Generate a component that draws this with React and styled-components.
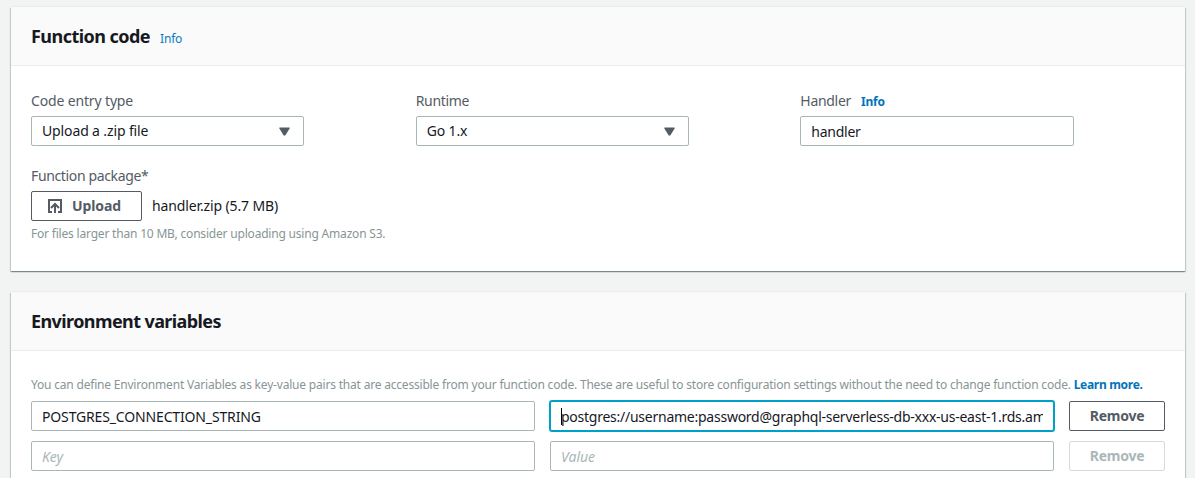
import React from 'react';
import styled, { createGlobalStyle, css } from 'styled-components';

const GlobalStyle = createGlobalStyle`
  * { box-sizing: border-box; }
  html, body { margin: 0; height: 100%; overflow: hidden; }
  body {
    background: #f2f3f3;
    color: #16191f;
    font-family: 'Noto Sans', 'Open Sans', sans-serif;
    font-size: 14px;
    line-height: 20px;
  }
`;

const Page = styled.main`
  display: flex;
  flex-direction: column;
  gap: 21px;
  height: 478px;
  padding: 7px 10px 0 11px;
  overflow: hidden;
`;

const Card = styled.section`
  flex: none;
  height: ${(p) => p.$height}px;
  background: #fff;
  box-shadow:
    0 -1px 0 0 #eaeded,
    0 1px 1px 0 rgba(0, 28, 36, 0.3),
    1px 1px 1px 0 rgba(0, 28, 36, 0.15),
    -1px 1px 1px 0 rgba(0, 28, 36, 0.15);
`;

const CardHeader = styled.header`
  display: flex;
  align-items: baseline;
  gap: 10px;
  height: 59px;
  padding: 17px 20px 0;
  background: #fafafa;
  border-bottom: 1px solid #eaeded;
`;

const Title = styled.h2`
  margin: 0;
  font-size: 18px;
  line-height: 24px;
  font-weight: 700;
  letter-spacing: ${(p) => p.$tracking}px;
`;

const InfoLink = styled.a`
  color: ${(p) => (p.$bold ? '#0073bb' : '#087cc0')};
  font-size: 12px;
  font-weight: ${(p) => (p.$bold ? 700 : 400)};
  letter-spacing: -0.2px;
`;

const CardBody = styled.div`
  display: flex;
  flex-direction: column;
  padding: 25px 20px 0;
`;

const FieldGrid = styled.div`
  display: grid;
  grid-template-columns: repeat(3, 1fr);
  margin: 0 -20px 20px 0;
`;

const Field = styled.div`
  display: flex;
  flex-direction: column;
  align-items: flex-start;
`;

const Label = styled.label`
  display: flex;
  align-items: baseline;
  gap: 10px;
  height: 25px;
  line-height: 20px;
  color: #545b64;
  letter-spacing: ${(p) => p.$tracking || 0}px;
`;

const box = css`
  height: 30px;
  border: 1px solid #aab7b8;
  border-radius: 2px;
  background: #fff;
`;

const Select = styled.div`
  ${box}
  display: flex;
  align-items: center;
  justify-content: space-between;
  width: 273px;
  padding: 0 13px 0 10px;
  letter-spacing: -0.13px;
`;

const Input = styled.input`
  ${box}
  display: block;
  width: ${(p) => p.$width || '274px'};
  min-width: 0;
  padding: 1px 10px 0;
  font: inherit;
  color: #16191f;
  letter-spacing: ${(p) => p.$tracking || 0}px;
  outline: none;
  &::placeholder {
    color: #aab7b8;
    font-style: italic;
    opacity: 1;
  }
  ${(p) =>
    p.$focused &&
    css`
      border-color: #00a1c9;
      box-shadow: 0 0 0 1px #00a1c9;
    `}
`;

const Button = styled.button`
  display: flex;
  align-items: center;
  justify-content: ${(p) => (p.$withIcon ? 'flex-start' : 'center')};
  gap: 9px;
  height: 30px;
  width: ${(p) => p.$width}px;
  padding: ${(p) => (p.$withIcon ? '0 0 0 15px' : '0')};
  border: 1px solid #545b64;
  border-radius: 2px;
  background: #fff;
  color: #545b64;
  font: inherit;
  font-weight: 700;
  letter-spacing: ${(p) => p.$tracking || 0}px;
  &:disabled {
    border-color: #d5dbdb;
    color: #aab7b8;
  }
`;

const UploadRow = styled.div`
  display: flex;
  align-items: center;
  gap: 10px;
`;

const FileName = styled.span`
  letter-spacing: -0.13px;
`;

const Hint = styled.p`
  margin: 0;
  padding-top: ${(p) => p.$top}px;
  color: #879596;
  font-size: 12px;
  line-height: 18px;
  letter-spacing: -0.195px;
  white-space: nowrap;
`;

const LearnMore = styled.a`
  color: #0073bb;
  font-weight: 700;
  letter-spacing: -0.3px;
`;

const VariableList = styled.div`
  display: grid;
  gap: 10px;
  margin-top: 7px;
`;

const VariableRow = styled.div`
  display: grid;
  grid-template-columns: 504px 504px 96px;
  column-gap: 15px;
`;

const ValueCell = styled.div`
  position: relative;
`;

const Caret = styled.span`
  position: absolute;
  left: 11px;
  top: 7px;
  width: 1px;
  height: 17px;
  background: #000;
`;

const Arrow = () => (
  <svg width="11" height="9" viewBox="0 0 11 9" aria-hidden="true">
    <path d="M0.4 0.5h10.2v1L6.3 8.4H4.7L0.4 1.5z" fill="#545b64" />
  </svg>
);

const UploadIcon = () => (
  <svg width="16" height="16" viewBox="0 0 16 16" fill="none" stroke="#545b64" strokeWidth="2" aria-hidden="true">
    <path d="M5 14H2V2h12v12h-3" />
    <path d="M8 15V6.5M4 10l4-4 4 4" />
  </svg>
);

export default function App() {
  return (
    <>
      <GlobalStyle />
      <Page>
        <Card $height={264}>
          <CardHeader>
            <Title $tracking={-0.54}>Function code</Title>
            <InfoLink>Info</InfoLink>
          </CardHeader>
          <CardBody>
            <FieldGrid>
              <Field>
                <Label $tracking={-0.15}>Code entry type</Label>
                <Select>
                  Upload a .zip file
                  <Arrow />
                </Select>
              </Field>
              <Field>
                <Label $tracking={-0.3}>Runtime</Label>
                <Select>
                  Go 1.x
                  <Arrow />
                </Select>
              </Field>
              <Field>
                <Label $tracking={-0.3}>
                  Handler
                  <InfoLink $bold>Info</InfoLink>
                </Label>
                <Input $tracking={-0.25} defaultValue="handler" />
              </Field>
            </FieldGrid>
            <Field>
              <Label $tracking={-0.36}>Function package*</Label>
              <UploadRow>
                <Button $width={111} $tracking={-0.1} $withIcon>
                  <UploadIcon />
                  Upload
                </Button>
                <FileName>handler.zip (5.7 MB)</FileName>
              </UploadRow>
              <Hint $top={4}>For files larger than 10 MB, consider uploading using Amazon S3.</Hint>
            </Field>
          </CardBody>
        </Card>

        <Card $height={240}>
          <CardHeader>
            <Title $tracking={-0.59}>Environment variables</Title>
          </CardHeader>
          <CardBody>
            <Hint $top={0}>
              You can define Environment Variables as key-value pairs that are accessible from your function code. These are
              useful to store configuration settings without the need to change function code.{' '}
              <LearnMore>Learn more.</LearnMore>
            </Hint>
            <VariableList>
              <VariableRow>
                <Input $width="100%" $tracking={-0.15} defaultValue="POSTGRES_CONNECTION_STRING" />
                <ValueCell>
                  <Input
                    $width="100%"
                    $tracking={-0.25}
                    $focused
                    defaultValue="postgres://username:password@graphql-serverless-db-xxx-us-east-1.rds.amazonaws.com"
                  />
                  <Caret />
                </ValueCell>
                <Button $width={96} $tracking={-0.25}>Remove</Button>
              </VariableRow>
              <VariableRow>
                <Input $width="100%" placeholder="Key" />
                <Input $width="100%" placeholder="Value" />
                <Button $width={96} $tracking={-0.25} disabled>Remove</Button>
              </VariableRow>
            </VariableList>
          </CardBody>
        </Card>
      </Page>
    </>
  );
}
